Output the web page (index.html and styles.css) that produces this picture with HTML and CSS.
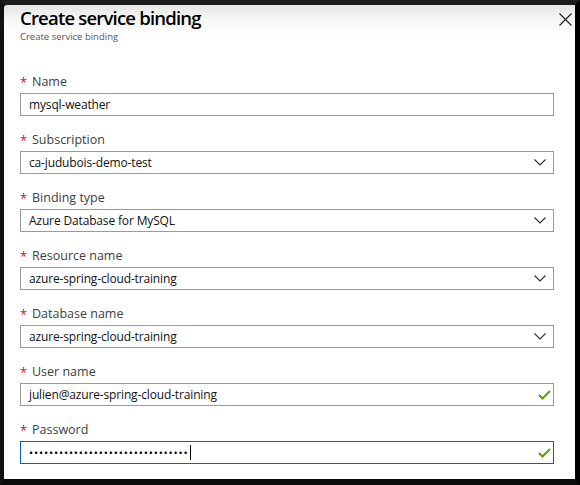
FILE: index.html
```html
<!DOCTYPE html>
<html>
<head>
<meta charset="utf-8">
<link rel="stylesheet" href="styles.css">
</head>
<body>
<div class="frame">
  <div class="panel">
    <header class="head">
      <div class="titles">
        <h1 class="title">Create service binding</h1>
        <div class="subtitle">Create service binding</div>
      </div>
      <svg class="close" width="13" height="13" viewBox="0 0 13 13"><path d="M0.5 0.5 L12.5 12.5 M12.5 0.5 L0.5 12.5" stroke="#222" stroke-width="1.2" fill="none"/></svg>
    </header>
    <form class="fields">
      <div class="field">
        <label class="label"><span class="req">*</span>Name</label>
        <div class="box"><span class="val">mysql-weather</span></div>
      </div>
      <div class="field">
        <label class="label"><span class="req">*</span>Subscription</label>
        <div class="box"><span class="val">ca-judubois-demo-test</span><svg class="chev" width="12" height="7" viewBox="0 0 12 7"><path d="M0.5 0.5 L6 6 L11.5 0.5" stroke="#333" stroke-width="1.2" fill="none"/></svg></div>
      </div>
      <div class="field">
        <label class="label"><span class="req">*</span>Binding type</label>
        <div class="box"><span class="val">Azure Database for MySQL</span><svg class="chev" width="12" height="7" viewBox="0 0 12 7"><path d="M0.5 0.5 L6 6 L11.5 0.5" stroke="#333" stroke-width="1.2" fill="none"/></svg></div>
      </div>
      <div class="field">
        <label class="label"><span class="req">*</span>Resource name</label>
        <div class="box"><span class="val">azure-spring-cloud-training</span><svg class="chev" width="12" height="7" viewBox="0 0 12 7"><path d="M0.5 0.5 L6 6 L11.5 0.5" stroke="#333" stroke-width="1.2" fill="none"/></svg></div>
      </div>
      <div class="field">
        <label class="label"><span class="req">*</span>Database name</label>
        <div class="box"><span class="val">azure-spring-cloud-training</span><svg class="chev" width="12" height="7" viewBox="0 0 12 7"><path d="M0.5 0.5 L6 6 L11.5 0.5" stroke="#333" stroke-width="1.2" fill="none"/></svg></div>
      </div>
      <div class="field">
        <label class="label"><span class="req">*</span>User name</label>
        <div class="box"><span class="val">julien@azure-spring-cloud-training</span><svg class="check" width="13" height="10" viewBox="0 0 13 10"><path d="M1 5 L4.5 8.5 L12 1" stroke="#57a300" stroke-width="2" fill="none"/></svg></div>
      </div>
      <div class="field">
        <label class="label"><span class="req">*</span>Password</label>
        <div class="box focus"><span class="val dots">••••••••••••••••••••••••••••••••</span><span class="caret"></span><svg class="check" width="13" height="10" viewBox="0 0 13 10"><path d="M1 5 L4.5 8.5 L12 1" stroke="#57a300" stroke-width="2" fill="none"/></svg></div>
      </div>
    </form>
  </div>
</div>
</body>
</html>
```
FILE: styles.css
```css
html, body {
  margin: 0;
  padding: 0;
  background: #000;
}
.frame {
  width: 580px;
  height: 485px;
  box-sizing: border-box;
  border-top: 5px solid #1b1b1b;
  border-left: 4px solid #111;
  border-right: 5px solid #000;
  border-bottom: 6px solid #0b0b0b;
  background: #000;
}
.panel {
  height: 100%;
  box-sizing: border-box;
  background: linear-gradient(#e4e4e4 0px, #f6f6f6 14px, #fff 32px, #fff 100%);
  border-top-left-radius: 3px;
  padding: 1px 20px 0 16px;
  font-family: "Open Sans", "Noto Sans", sans-serif;
  color: #222;
}
.head {
  display: flex;
  justify-content: space-between;
  align-items: flex-start;
}
.title {
  margin: 0;
  font-size: 18.5px;
  line-height: 24px;
  font-weight: 600;
  color: #000;
  letter-spacing: -0.8px;
}
.subtitle {
  font-size: 9.5px;
  line-height: 13px;
  color: #555;
}
.close {
  margin-top: 7px;
  margin-right: -17px;
}
.fields {
  margin-top: 31px;
  display: flex;
  flex-direction: column;
  gap: 16px;
}
.field {
  display: flex;
  flex-direction: column;
  gap: 3px;
}
.label {
  font-size: 12.5px;
  line-height: 16px;
  height: 16px;
  color: #404040;
  display: flex;
  align-items: center;
}
.req {
  color: #e00b1c;
  width: 12px;
  font-size: 13px;
  line-height: 16px;
}
.box {
  height: 23px;
  box-sizing: border-box;
  border: 1px solid #9a9a9a;
  display: flex;
  align-items: center;
  padding: 0 9px 0 8px;
  width: 534px;
}
.box.focus {
  border-color: #0067b8;
}
.val {
  font-size: 12px;
  color: #111;
  flex: 0 0 auto;
  letter-spacing: -0.15px;
}
.dots {
  font-size: 11px;
  letter-spacing: 0.85px;
  color: #000;
}
.caret {
  width: 1px;
  height: 15px;
  background: #000;
  margin-left: 1px;
}
.chev {
  margin-left: auto;
  margin-right: -2px;
}
.check {
  margin-left: auto;
  margin-right: -7px;
}
```
